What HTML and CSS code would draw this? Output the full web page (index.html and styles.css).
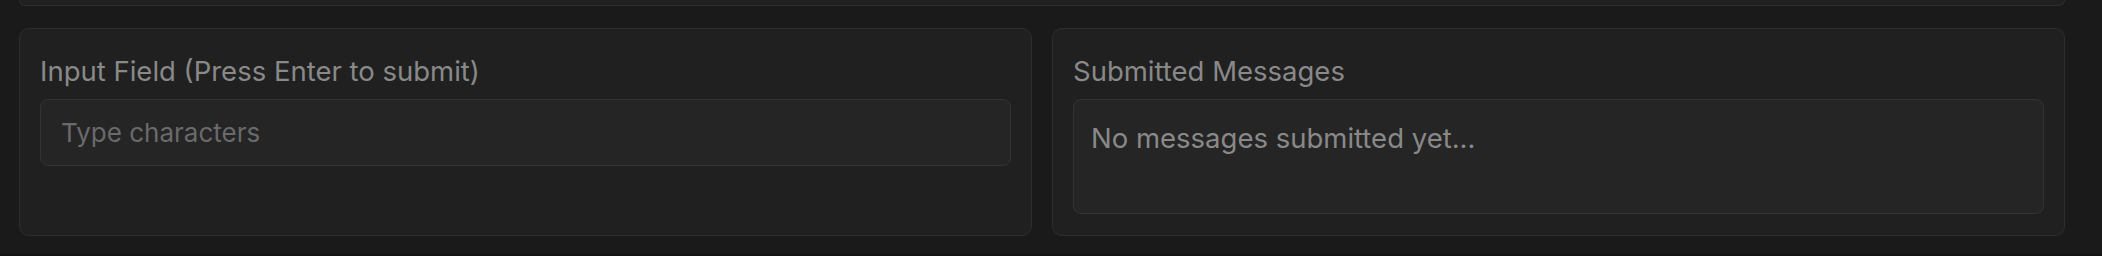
FILE: index.html
```html
<!DOCTYPE html>
<html lang="en">
<head>
  <meta charset="UTF-8">
  <meta name="viewport" content="width=device-width, initial-scale=1.0">
  <title>Input Demo</title>
  <link rel="stylesheet" href="styles.css">
</head>
<body>
  <div class="page">
    <div class="panel panel-top"></div>

    <div class="columns">
      <div class="panel">
        <label class="panel-label" for="charInput">Input Field (Press Enter to submit)</label>
        <input type="text" id="charInput" class="text-input" placeholder="Type characters">
      </div>

      <div class="panel">
        <div class="panel-label">Submitted Messages</div>
        <div class="messages" id="messages">No messages submitted yet...</div>
      </div>
    </div>
  </div>
</body>
</html>
```

FILE: styles.css
```css
/* Dark panels */
html {
  background-color: #121212;
}

body {
  margin: 0;
  font-family: 'Inter', 'Noto Sans', sans-serif;
  color: #8a8a8a;
}

.page {
  box-sizing: border-box;
  height: 254px;
  padding: 0 37px 0 19px;
  background-color: #1a1a1a;
}

.panel {
  background: #202020;
  border: 1px solid #2e2e2e;
  border-radius: 10px;
  padding: 20px 20px 21px;
}

.panel-top {
  height: 5px;
  padding: 0;
  border-top: none;
  border-radius: 0 0 10px 10px;
  margin-bottom: 22px;
}

.columns {
  display: grid;
  grid-template-columns: 1fr 1fr;
  gap: 20px;
}

.panel-label {
  display: block;
  font-size: 27.5px;
  line-height: 38px;
  padding-top: 3px;
  margin-bottom: 9px;
  color: #898989;
}

.text-input {
  box-sizing: border-box;
  width: 100%;
  height: 67px;
  padding: 0 20px;
  background: #252525;
  border: 1px solid #333;
  border-radius: 8px;
  font-family: inherit;
  font-size: 26px;
  color: #bbb;
  outline: none;
}

.text-input::placeholder {
  color: #6a6a6a;
}

.messages {
  box-sizing: border-box;
  height: 115px;
  padding: 19px 17px 0;
  background: #252525;
  border: 1px solid #333;
  border-radius: 8px;
  font-size: 27.5px;
  line-height: 38px;
  color: #898989;
}
```
